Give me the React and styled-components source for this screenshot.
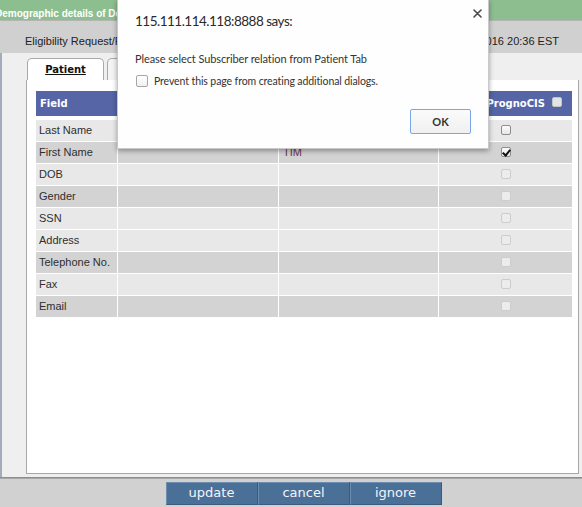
import styled, { createGlobalStyle } from "styled-components";

const GlobalStyle = createGlobalStyle`
  html, body {
    margin: 0;
    padding: 0;
    background: #efefef;
    overflow: hidden;
  }
  * {
    box-sizing: border-box;
  }
`;

const rows = [
  { label: "Last Name", shade: "light", box: "on" },
  { label: "First Name", shade: "dark", value: "TIM", box: "checked" },
  { label: "DOB", shade: "light", box: "off" },
  { label: "Gender", shade: "dark", box: "off" },
  { label: "SSN", shade: "light", box: "off" },
  { label: "Address", shade: "light", box: "off" },
  { label: "Telephone No.", shade: "dark", box: "off" },
  { label: "Fax", shade: "light", box: "off" },
  { label: "Email", shade: "dark", box: "off" },
];

function App() {
  return (
    <>
      <GlobalStyle />
      <Page>
        <TitleBar>
          <span>Demographic details of Doe, John</span>
        </TitleBar>
        <InfoBar>
          <span>Eligibility Request/Response</span>
          <span>Response Date: 03/15/2016 20:36 EST</span>
        </InfoBar>
        <Body>
          <Tabs>
            <Tab $active>Patient</Tab>
            <Tab>Insurance</Tab>
          </Tabs>
          <Panel>
            <HeadRow>
              <HeadCell>Field</HeadCell>
              <HeadCell>Eligibility</HeadCell>
              <HeadCell>Value</HeadCell>
              <HeadCell $right>
                PrognoCIS
                <Box $state="head" />
              </HeadCell>
            </HeadRow>
            <Rows>
              {rows.map((r) => (
                <Row key={r.label}>
                  <Cell $shade={r.shade}>{r.label}</Cell>
                  <Cell $shade={r.shade}></Cell>
                  <Cell $shade={r.shade} $value>
                    {r.value}
                  </Cell>
                  <Cell $shade={r.shade} $center>
                    <Box $state={r.box} />
                  </Cell>
                </Row>
              ))}
            </Rows>
          </Panel>
        </Body>
        <Footer>
          <ActionButton>update</ActionButton>
          <ActionButton>cancel</ActionButton>
          <ActionButton>ignore</ActionButton>
        </Footer>

        <Dialog>
          <DialogTitle>115.111.114.118:8888 says:</DialogTitle>
          <CloseButton>
            <svg width="9" height="9" viewBox="0 0 9 9">
              <path
                d="M1 1 L8 8 M8 1 L1 8"
                stroke="#4a4a4a"
                strokeWidth="1.6"
                strokeLinecap="round"
              />
            </svg>
          </CloseButton>
          <Message>Please select Subscriber relation from Patient Tab</Message>
          <PreventRow>
            <DialogCheck />
            Prevent this page from creating additional dialogs.
          </PreventRow>
          <DialogActions>
            <OkButton>OK</OkButton>
          </DialogActions>
        </Dialog>
      </Page>
    </>
  );
}

const Page = styled.div`
  position: relative;
  width: 582px;
  height: 507px;
  display: flex;
  flex-direction: column;
  overflow: hidden;
`;

const TitleBar = styled.div`
  height: 20px;
  padding-top: 8px;
  line-height: 12px;
  background: #8cbe8f;
  color: #fff;
  font-family: "Liberation Sans", Arial, sans-serif;
  font-weight: bold;
  font-size: 10px;
  white-space: nowrap;
  overflow: hidden;
  span {
    margin-left: -5px;
  }
`;

const InfoBar = styled.div`
  height: 33px;
  padding: 8px 23px 0 25px;
  display: flex;
  align-items: center;
  justify-content: space-between;
  background: #d0d0d0;
  border-top: 1px solid #b4b4b4;
  font-family: "Liberation Sans", Arial, sans-serif;
  font-size: 11px;
  color: #222;
`;

const Body = styled.div`
  flex: 1;
  display: flex;
  flex-direction: column;
  padding: 5px 3px 3px 24px;
  background: #efefef;
  border-left: 2px solid #a3abbd;
`;

const Tabs = styled.div`
  display: flex;
  height: 22px;
  gap: 3px;
  padding-left: 1px;
`;

const Tab = styled.div`
  width: 77px;
  display: flex;
  align-items: center;
  justify-content: center;
  background: ${(p) => (p.$active ? "#fff" : "#f4f4f4")};
  border: 1px solid #a9a9a9;
  border-bottom: none;
  border-radius: 5px 5px 0 0;
  font-family: "DejaVu Sans", Verdana, sans-serif;
  font-weight: bold;
  font-size: 10px;
  color: #111;
  text-decoration: ${(p) => (p.$active ? "underline" : "none")};
`;

const Panel = styled.div`
  flex: 1;
  background: #fff;
  border: 1px solid #a8a8a8;
  border-top: none;
  padding: 11px 6px 0 9px;
`;

const grid = `
  display: grid;
  grid-template-columns: 81px 160px 159px 1fr;
  column-gap: 1px;
`;

const HeadRow = styled.div`
  ${grid}
  height: 25px;
  background: #5565a5;
`;

const HeadCell = styled.div`
  display: flex;
  align-items: center;
  justify-content: ${(p) => (p.$right ? "flex-end" : "flex-start")};
  gap: 7px;
  padding: ${(p) => (p.$right ? "0 10px 0 0" : "0 0 0 4px")};
  font-family: "DejaVu Sans", Verdana, sans-serif;
  font-weight: bold;
  font-size: 10px;
  color: #fff;
`;

const Rows = styled.div`
  margin-top: 4px;
  display: flex;
  flex-direction: column;
  gap: 1px;
`;

const Row = styled.div`
  ${grid}
  height: 21px;
`;

const Cell = styled.div`
  display: flex;
  align-items: center;
  justify-content: ${(p) => (p.$center ? "center" : "flex-start")};
  padding-left: ${(p) => (p.$center ? "0" : p.$value ? "4px" : "3px")};
  padding-bottom: 1px;
  background: ${(p) => (p.$shade === "dark" ? "#d3d3d3" : "#e8e8e8")};
  font-family: "Liberation Sans", Arial, sans-serif;
  font-size: 11px;
  color: ${(p) => (p.$value ? "#6a3553" : "#2e2e2e")};
`;

const boxStyles = {
  head: "background:#e4e4e4;border:1px solid #c4c4c4;margin-top:-3px;",
  on: "background:linear-gradient(#fdfdfd,#e6e6e6);border:1px solid #8e8e8e;",
  checked: "background:linear-gradient(#fdfdfd,#e6e6e6);border:1px solid #8e8e8e;",
  off: "background:#ececec;border:1px solid #cdcdcd;",
};

const Box = styled.span`
  position: relative;
  display: inline-block;
  width: 10px;
  height: 10px;
  border-radius: 2px;
  ${(p) => boxStyles[p.$state]}
  ${(p) =>
    p.$state === "checked" &&
    `
    &::after {
      content: "";
      position: absolute;
      left: 2px;
      top: 0px;
      width: 3px;
      height: 6px;
      border: solid #111;
      border-width: 0 2px 2px 0;
      transform: rotate(40deg);
    }
  `}
`;

const Footer = styled.div`
  height: 30px;
  display: flex;
  justify-content: center;
  align-items: flex-start;
  padding: 4px 0 0 25px;
  background: #d1d1d1;
  border-top: 1px solid #8d8d8d;
  box-shadow: inset 0 1px 0 #a8a8a8;
`;

const ActionButton = styled.button`
  width: 92px;
  height: 23px;
  margin: 0;
  padding: 0 0 2px;
  background: #4b7098;
  border: 1px solid #3b5a7c;
  border-top-color: #6d8db0;
  border-left-color: #6d8db0;
  color: #f2f5f9;
  font-family: "DejaVu Sans", Verdana, sans-serif;
  font-size: 13px;
  line-height: 20px;
`;

const Dialog = styled.div`
  position: absolute;
  left: 117px;
  top: -1px;
  width: 372px;
  height: 150px;
  background: #fefefe;
  border: 1px solid #c9c9c9;
  box-shadow: 0 2px 5px rgba(0, 0, 0, 0.35);
  padding: 0 17px 0 17px;
  font-family: Lato, "Liberation Sans", sans-serif;
  color: #333;
`;

const DialogTitle = styled.div`
  margin-top: 12px;
  font-size: 13.5px;
  letter-spacing: -0.5px;
  line-height: 18px;
  color: #2a2a2a;
`;

const CloseButton = styled.div`
  position: absolute;
  right: 6px;
  top: 9px;
  width: 9px;
  height: 9px;
  display: flex;
`;

const Message = styled.div`
  margin-top: 22px;
  font-size: 11px;
  letter-spacing: -0.1px;
  line-height: 14px;
`;

const PreventRow = styled.label`
  margin-top: 8px;
  display: flex;
  align-items: center;
  gap: 6px;
  font-size: 10.5px;
  letter-spacing: -0.1px;
  line-height: 14px;
`;

const DialogCheck = styled.span`
  width: 12px;
  height: 12px;
  margin-left: 1px;
  border: 1px solid #a6a6a6;
  border-radius: 2px;
  background: linear-gradient(#fff, #f1f1f1);
`;

const DialogActions = styled.div`
  display: flex;
  justify-content: flex-end;
  margin-top: 21px;
`;

const OkButton = styled.button`
  width: 61px;
  height: 25px;
  margin: 0;
  padding: 0;
  border: 1px solid #7ba7ea;
  border-radius: 2px;
  background: linear-gradient(#fbfbfb, #f0f0f0);
  font-family: Lato, "Liberation Sans", sans-serif;
  font-weight: bold;
  font-size: 11px;
  color: #333;
`;

export default App;
